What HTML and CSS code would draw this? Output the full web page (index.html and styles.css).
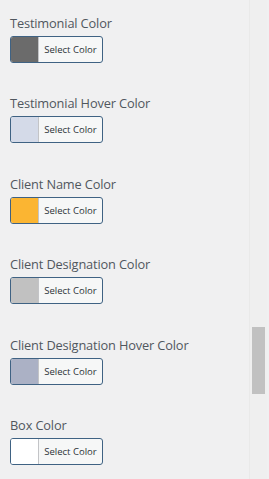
FILE: index.html
```html
<!DOCTYPE html>
<html lang="en">
<head>
    <meta charset="UTF-8">
    <title>Testimonial Colors</title>
    <link rel="stylesheet" href="styles.css">
</head>
<body>

<div class="panel">
    <!-- Testimonial -->
    <div class="field">
        <label>Testimonial Color</label>
        <button class="color-result"><span class="swatch swatch-testimonial"></span><span class="txt">Select Color</span></button>
    </div>
    <div class="field">
        <label>Testimonial Hover Color</label>
        <button class="color-result"><span class="swatch swatch-testimonial-hover"></span><span class="txt">Select Color</span></button>
    </div>

    <!-- Client -->
    <div class="field">
        <label>Client Name Color</label>
        <button class="color-result"><span class="swatch swatch-name"></span><span class="txt">Select Color</span></button>
    </div>
    <div class="field">
        <label>Client Designation Color</label>
        <button class="color-result"><span class="swatch swatch-designation"></span><span class="txt">Select Color</span></button>
    </div>
    <div class="field">
        <label>Client Designation Hover Color</label>
        <button class="color-result"><span class="swatch swatch-designation-hover"></span><span class="txt">Select Color</span></button>
    </div>

    <!-- Box -->
    <div class="field">
        <label>Box Color</label>
        <button class="color-result"><span class="swatch swatch-box"></span><span class="txt">Select Color</span></button>
    </div>
</div>

<div class="scrollbar">
    <div class="thumb"></div>
</div>

</body>
</html>
```

FILE: styles.css
```css
body {
    margin: 0;
    height: 479px;
    overflow: hidden;
    display: flex;
    background: #f0f0f1;
    font-family: 'Open Sans', 'Noto Sans', sans-serif;
    color: #50575e;
}

.panel {
    flex: 1;
    padding: 14px 0 0 10px;
}

.field {
    margin-bottom: 31.4px;
}

.field label {
    display: block;
    font-size: 12.8px;
    line-height: 18px;
    margin-bottom: 4px;
    letter-spacing: -0.15px;
}

.color-result {
    display: flex;
    width: 93px;
    height: 27px;
    padding: 0;
    border: 1px solid #3f6283;
    border-radius: 3px;
    background: #f6f7f7;
    overflow: hidden;
    font-family: inherit;
    cursor: pointer;
}

.swatch {
    width: 27px;
    height: 100%;
    border-right: 1px solid #c3c4c7;
}

.txt {
    flex: 1;
    font-size: 9.5px;
    line-height: 25px;
    color: #2c3338;
    text-align: center;
}

.swatch-testimonial { background: #6b6b6b; }
.swatch-testimonial-hover { background: #d4dae8; }
.swatch-name { background: #fbb532; }
.swatch-designation { background: #c1c1c1; }
.swatch-designation-hover { background: #abb1c5; }
.swatch-box { background: #ffffff; }

.scrollbar {
    width: 17px;
    margin-right: 2px;
    background: #efefef;
    border-left: 1px solid #e9e9e9;
}

.thumb {
    width: 13px;
    height: 67px;
    margin: 327px 0 0 2px;
    background: #c1c1c1;
}
```
